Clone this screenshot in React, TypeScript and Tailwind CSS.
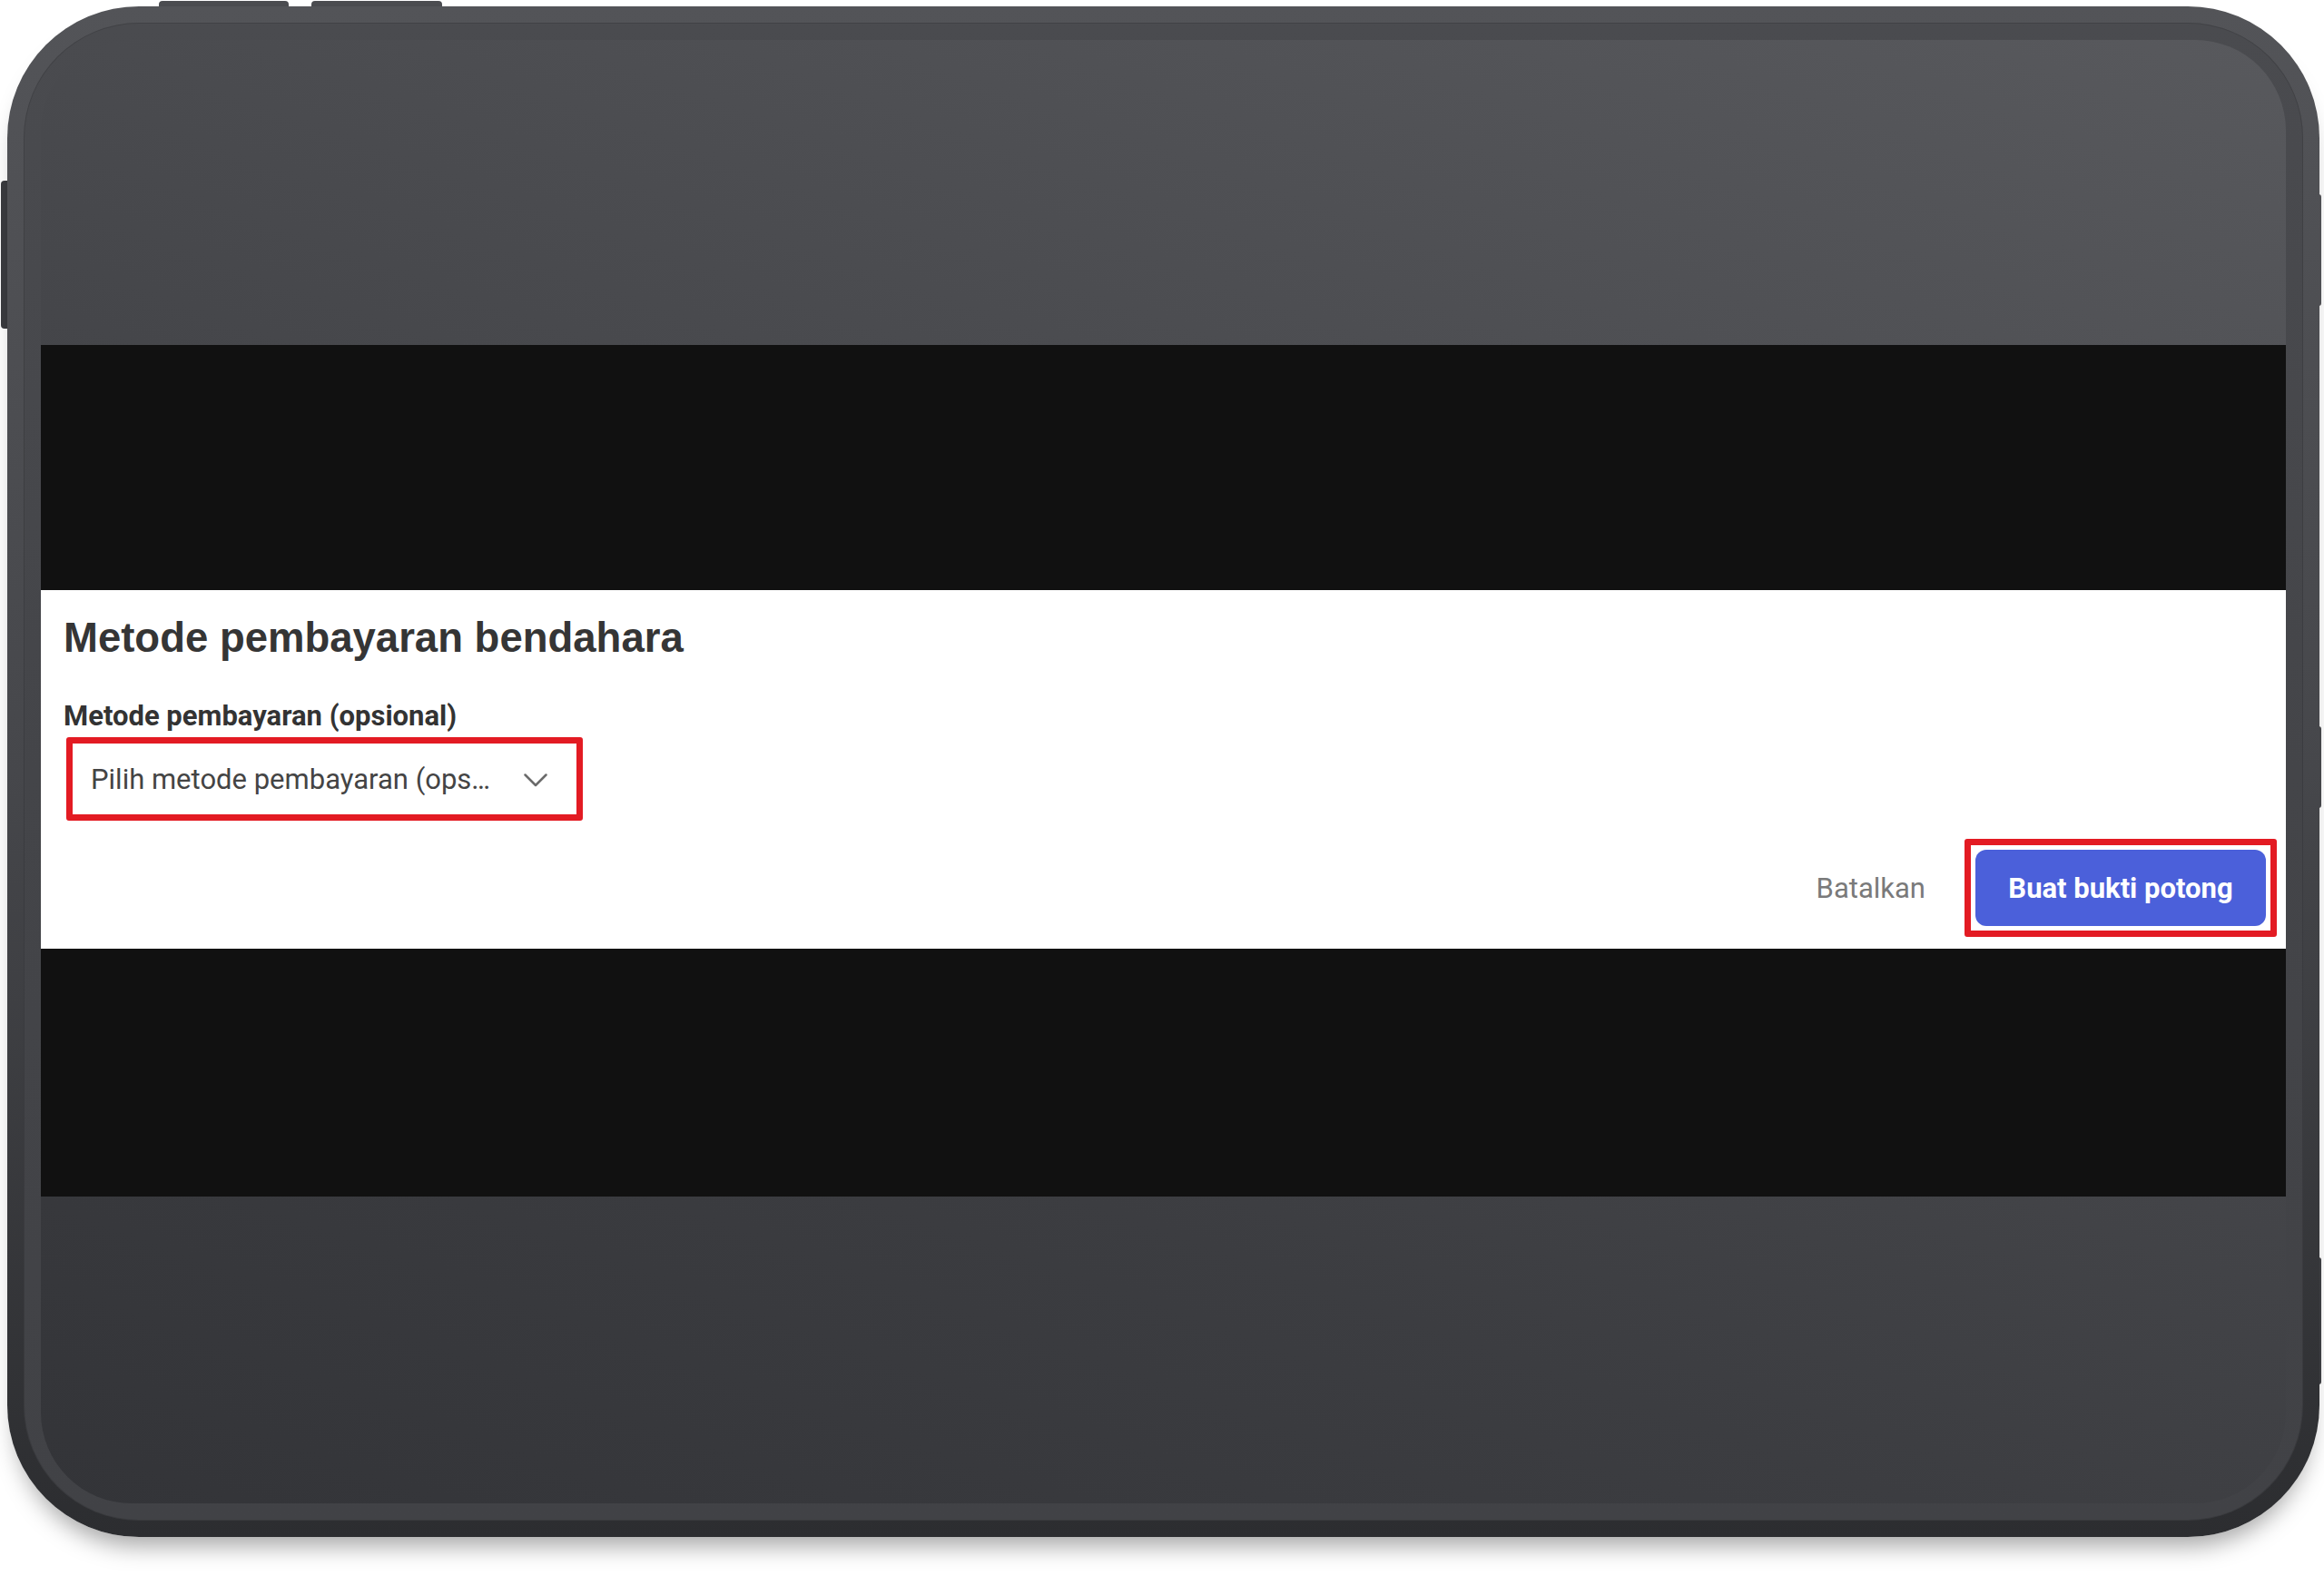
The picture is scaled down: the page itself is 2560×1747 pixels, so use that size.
import React from "react";

export default function App() {
  return (
    <div className="relative w-[2560px] h-[1747px] bg-white overflow-hidden pl-[8px] pt-[7px]">
      {/* hardware buttons */}
      <div className="absolute left-[175px] top-[1px] w-[143px] h-[8px] rounded-t-[4px] bg-[#4b4c50]" />
      <div className="absolute left-[343px] top-[1px] w-[144px] h-[8px] rounded-t-[4px] bg-[#4b4c50]" />
      <div className="absolute left-[1px] top-[199px] w-[9px] h-[163px] rounded-l-[4px] bg-[#3b3c40]" />
      <div className="absolute left-[2553px] top-[214px] w-[4px] h-[123px] rounded-r-[3px] bg-[#55565a]" />
      <div className="absolute left-[2553px] top-[800px] w-[4px] h-[90px] rounded-r-[3px] bg-[#4a4b4f]" />
      <div className="absolute left-[2553px] top-[1385px] w-[4px] h-[140px] rounded-r-[3px] bg-[#414246]" />

      {/* tablet body */}
      <div className="relative w-[2547px] h-[1686px] rounded-[145px] p-[18px] bg-[linear-gradient(180deg,#535458_0%,#46474b_50%,#2c2d30_100%)] shadow-[0_20px_26px_-10px_rgba(0,0,0,0.35)]">
        <div className="w-full h-full rounded-[127px] p-[19px] bg-[linear-gradient(180deg,#4a4b4f_0%,#444549_50%,#414246_100%)] shadow-[inset_0_0_0_1px_rgba(0,0,0,0.12)]">
          <div className="w-full h-full rounded-[100px] overflow-hidden flex flex-col bg-[linear-gradient(200deg,#58595d_0%,#4a4b4f_35%,#3c3d41_70%,#333438_100%)]">
            <div className="h-[336px] shrink-0" />
            <div className="h-[270px] shrink-0 bg-[#111111]" />

            {/* dialog */}
            <div className="h-[395px] shrink-0 bg-white flex flex-col pl-[25px] pr-[10px] pt-[26px] pb-[13px]">
              <h2 className="text-[45.5px] leading-[54px] font-bold text-[#353535] font-['Liberation_Sans',Arial,sans-serif]">
                Metode pembayaran bendahara
              </h2>
              <div className="mt-[41px] text-[31px] leading-[36px] font-bold text-[#333333] font-['Roboto',sans-serif]">
                Metode pembayaran (opsional)
              </div>
              <div className="mt-[5px] ml-[3px] w-[569px] h-[92px] shrink-0 border-[7px] border-[#e31b23] rounded-[3px] flex items-center justify-between pl-[20px] pr-[32px] pt-[2px] font-['Roboto',sans-serif]">
                <span className="text-[31px] leading-[36px] text-[#444444]">
                  Pilih metode pembayaran (ops…
                </span>
                <svg width="26" height="15" viewBox="0 0 26 15" fill="none">
                  <polyline points="1.5,1.5 13,13 24.5,1.5" stroke="#6b6b6b" strokeWidth="2.5" strokeLinecap="round" strokeLinejoin="round" />
                </svg>
              </div>
              <div className="mt-[20px] flex justify-end items-center font-['Roboto',sans-serif]">
                <span className="mr-[43px] pt-[2px] text-[31px] leading-[36px] text-[#7a7a7a]">Batalkan</span>
                <div className="border-[7px] border-[#e31b23] rounded-[3px] p-[5px]">
                  <div className="w-[320px] h-[84px] rounded-[12px] bg-[#4b60da] flex items-center justify-center pt-[2px] text-white text-[31px] font-bold">
                    Buat bukti potong
                  </div>
                </div>
              </div>
            </div>

            <div className="h-[273px] shrink-0 bg-[#111111]" />
            <div className="flex-1" />
          </div>
        </div>
      </div>
    </div>
  );
}
